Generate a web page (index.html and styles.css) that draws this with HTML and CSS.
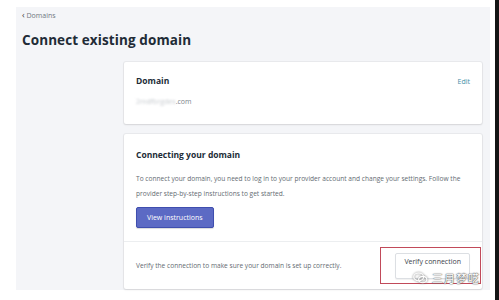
FILE: index.html
```html
<!DOCTYPE html>
<html lang="en">
<head>
<meta charset="utf-8">
<link rel="stylesheet" href="styles.css">
</head>
<body>
<div class="page">
  <div class="panel">
    <div class="crumb"><span class="chev">&#8249;</span> Domains</div>
    <h1 class="title">Connect existing domain</h1>
    <div class="cards">
      <section class="card card-domain">
        <div class="card-head">
          <h2 class="card-title">Domain</h2>
          <a class="edit">Edit</a>
        </div>
        <div class="domain-name"><span class="blur">2mdfbrgdes</span>.com</div>
      </section>
      <section class="card card-connect">
        <div class="connect-top">
          <h2 class="card-title">Connecting your domain</h2>
          <p class="desc">To connect your domain, you need to log in to your provider account and change your settings. Follow the provider step-by-step instructions to get started.</p>
          <button class="btn-primary">View instructions</button>
        </div>
        <div class="connect-bottom">
          <p class="desc">Verify the connection to make sure your domain is set up correctly.</p>
          <div class="highlight">
            <button class="btn-secondary">Verify connection</button>
            <div class="watermark">
              <svg class="wm-icon" viewBox="0 0 20 16" width="15" height="12">
                <ellipse cx="7.5" cy="6.5" rx="6.5" ry="5.2" fill="none" stroke="#fff" stroke-width="1.6"/>
                <ellipse cx="13" cy="10" rx="5.5" ry="4.3" fill="none" stroke="#fff" stroke-width="1.6"/>
              </svg>
              <span>三月梦呓</span>
            </div>
          </div>
        </div>
      </section>
    </div>
  </div>
</div>
<div class="edge"></div>
</body>
</html>
```
FILE: styles.css
```css
html, body {
  margin: 0;
  padding: 0;
}
body {
  width: 499px;
  height: 300px;
  display: flex;
  background: #fff;
  font-family: "Open Sans", "Noto Sans", sans-serif;
  overflow: hidden;
}
.page {
  flex: 1;
  padding: 7px 5px 10px 16px;
  display: flex;
}
.panel {
  flex: 1;
  background: #f4f5f8;
  padding: 3px 8px 0 6px;
  display: flex;
  flex-direction: column;
}
.edge {
  width: 4px;
  background: #141414;
}
.crumb {
  font-size: 7px;
  color: #707780;
  height: 10px;
  line-height: 10px;
}
.chev {
  font-size: 9px;
  color: #444;
}
.title {
  margin: 11px 0 0 0;
  font-size: 13.5px;
  line-height: 18px;
  font-weight: 700;
  color: #212b36;
  letter-spacing: 0.1px;
}
.cards {
  margin: 13px 0 0 102px;
  display: flex;
  flex-direction: column;
  gap: 10px;
}
.card {
  background: #fff;
  box-shadow: 0 0 0 1px rgba(63,63,68,0.06), 0 1px 2px rgba(63,63,68,0.12);
  border-radius: 2px;
}
.card-domain {
  padding: 13px 12px 14px 12px;
  height: 62px;
  box-sizing: border-box;
}
.card-head {
  display: flex;
  justify-content: space-between;
  align-items: center;
}
.card-title {
  margin: 0;
  font-size: 8.5px;
  font-weight: 700;
  color: #212b36;
  line-height: 12px;
}
.edit {
  font-size: 7px;
  color: #3f8fa8;
}
.domain-name {
  margin-top: 10px;
  font-size: 7px;
  color: #7d838a;
}
.blur {
  color: #c8ccd0;
  filter: blur(1px);
}
.connect-top {
  padding: 15px 12px 13px 12px;
  border-bottom: 1px solid #eceef0;
}
.desc {
  margin: 0;
  font-size: 6.6px;
  line-height: 15px;
  color: #646b72;
}
.connect-top .desc {
  margin-top: 10px;
}
.btn-primary {
  margin-top: 6px;
  font-family: inherit;
  font-size: 7px;
  color: #fff;
  background: #5c6ac4;
  border: 1px solid #3f4eae;
  border-radius: 2px;
  padding: 0 10px;
  height: 21px;
  box-shadow: 0 1px 1px rgba(0,0,0,0.15);
}
.connect-bottom {
  display: flex;
  align-items: center;
  justify-content: space-between;
  padding: 5px 1px 5px 12px;
}
.highlight {
  position: relative;
  border: 1.5px solid #c14a5a;
  padding: 5px 10px 4px 14px;
}
.btn-secondary {
  display: block;
  font-family: inherit;
  font-size: 7px;
  color: #3d434a;
  background: #fff;
  border: 1px solid #dcdfe3;
  border-radius: 2px;
  padding: 0 8px 9px 8px;
  height: 26px;
  box-shadow: 0 1px 1px rgba(0,0,0,0.06);
}
.watermark {
  position: absolute;
  right: 0px;
  bottom: -2px;
  display: flex;
  align-items: center;
  gap: 4px;
  color: #fff;
  font-family: "Noto Sans CJK SC", sans-serif;
  font-size: 11px;
  line-height: 14px;
  letter-spacing: 1px;
  text-shadow: 0 0 1px #555, 0 0 1px #555, 0 0 2px #888;
}
.wm-icon {
  filter: drop-shadow(0 0 1px #666);
}
```
